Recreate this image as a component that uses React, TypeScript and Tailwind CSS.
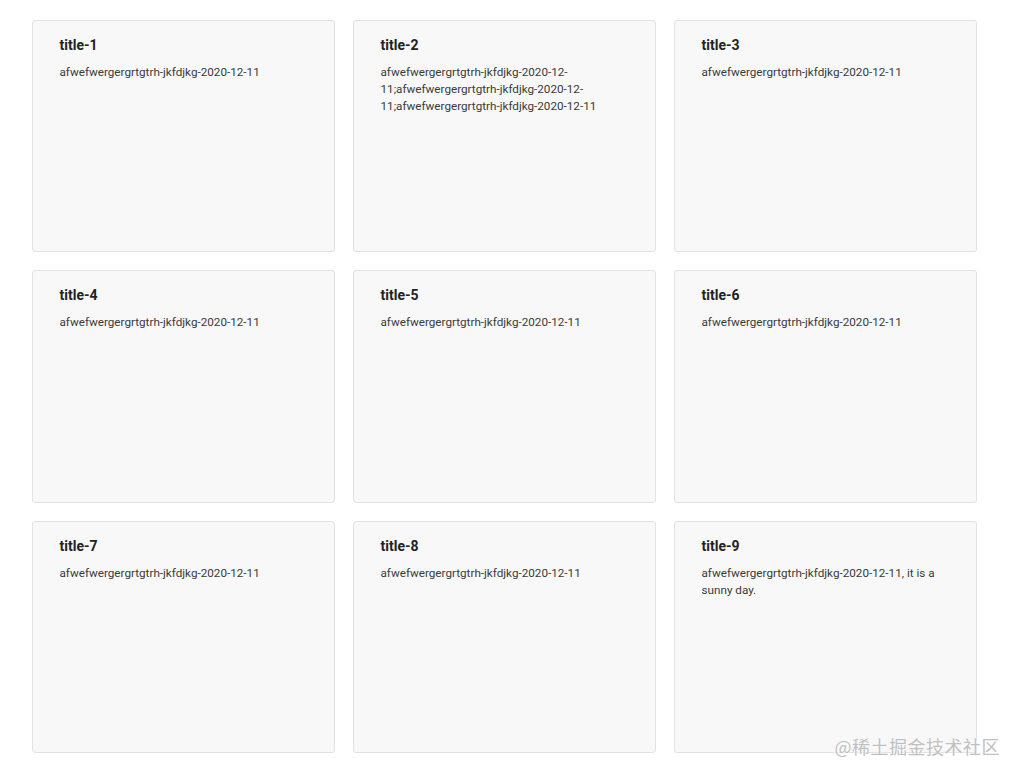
import React from "react";

const items = [
  { t: "title-1", d: "afwefwergergrtgtrh-jkfdjkg-2020-12-11" },
  {
    t: "title-2",
    d: "afwefwergergrtgtrh-jkfdjkg-2020-12-11;afwefwergergrtgtrh-jkfdjkg-2020-12-11;afwefwergergrtgtrh-jkfdjkg-2020-12-11",
  },
  { t: "title-3", d: "afwefwergergrtgtrh-jkfdjkg-2020-12-11" },
  { t: "title-4", d: "afwefwergergrtgtrh-jkfdjkg-2020-12-11" },
  { t: "title-5", d: "afwefwergergrtgtrh-jkfdjkg-2020-12-11" },
  { t: "title-6", d: "afwefwergergrtgtrh-jkfdjkg-2020-12-11" },
  { t: "title-7", d: "afwefwergergrtgtrh-jkfdjkg-2020-12-11" },
  { t: "title-8", d: "afwefwergergrtgtrh-jkfdjkg-2020-12-11" },
  { t: "title-9", d: "afwefwergergrtgtrh-jkfdjkg-2020-12-11, it is a sunny day." },
];

export default function App() {
  return (
    <div
      className="relative w-[1021px] h-[779px] bg-white overflow-hidden"
      style={{ fontFamily: "Roboto, 'Noto Sans', sans-serif" }}
    >
      <div className="pt-[20px] pl-[32px] grid grid-cols-[repeat(3,303px)] auto-rows-[232.3px] gap-x-[18px] gap-y-[18px]">
        {items.map((it) => (
          <div
            key={it.t}
            className="bg-[#f8f8f8] border border-[#e2e2e2] rounded-[3px] pt-[14px] pl-[26.5px] pr-[26px]"
          >
            <div className="text-[14px] leading-[20px] font-bold text-[#222]">{it.t}</div>
            <div className="mt-[9px] text-[11.7px] leading-[17px] text-[#3a3a3a]">{it.d}</div>
          </div>
        ))}
      </div>
      <div
        className="absolute right-[21px] top-[734px] text-[18px] leading-[24px] text-[#c0c0c0] tracking-[0.5px]"
        style={{
          fontFamily: "'Noto Sans CJK SC', sans-serif",
          textShadow: "0 0 2px #fff, 0 0 1px #fff",
        }}
      >
        @稀土掘金技术社区
      </div>
    </div>
  );
}
